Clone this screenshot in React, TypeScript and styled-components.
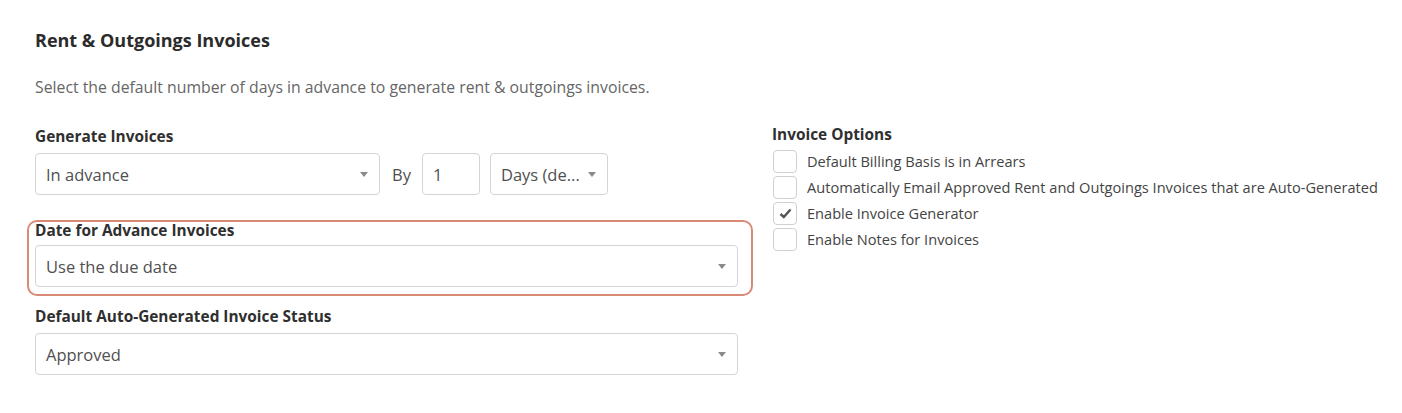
import styled, { createGlobalStyle } from "styled-components";

const GlobalStyle = createGlobalStyle`
    body {
        margin: 0;
        background: #ffffff;
        font-family: "Open Sans", "Noto Sans", sans-serif;
        color: #333333;
    }
`;

const Page = styled.div`
    padding: 28px 0 0 35px;
    height: 413px;
    box-sizing: border-box;
`;

const Title = styled.h3`
    margin: 0;
    font-size: 18px;
    font-weight: 700;
    line-height: 24px;
    color: #2b2b2b;
`;

const Description = styled.p`
    margin: 25px 0 0;
    font-size: 15.8px;
    line-height: 20px;
    color: #666666;
`;

const Columns = styled.div`
    display: grid;
    grid-template-columns: 703px auto;
    column-gap: 34px;
    margin-top: 30px;
`;

const Column = styled.div`
    display: flex;
    flex-direction: column;
`;

const FieldLabel = styled.div<{ $tight?: boolean }>`
    font-size: 15.4px;
    font-weight: 700;
    line-height: ${(p) => (p.$tight ? "18px" : "20px")};
    color: #2f2f2f;
    margin-bottom: ${(p) => (p.$tight ? "5px" : "6px")};
    white-space: nowrap;
`;

const Field = styled.div<{ $top?: number }>`
    margin-top: ${(p) => p.$top ?? 0}px;
`;

const Highlight = styled.div`
    margin: 25px -15px 0 -8px;
    padding: 0 13px 7px 6px;
    border: 2px solid #d98a76;
    border-radius: 10px;
`;

const Row = styled.div`
    display: flex;
    align-items: center;
`;

const SelectBox = styled.div<{ $width?: number }>`
    display: flex;
    align-items: center;
    justify-content: space-between;
    box-sizing: border-box;
    width: ${(p) => (p.$width ? `${p.$width}px` : "100%")};
    height: 42px;
    padding: 0 11px 0 10px;
    border: 1px solid #d4d4d4;
    border-radius: 4px;
    background: #ffffff;
    font-size: 16.5px;
    color: #505050;
    white-space: nowrap;
`;

const ByText = styled.span`
    margin: 0 11px 0 12px;
    font-size: 16.5px;
    color: #505050;
`;

const NumberBox = styled.div`
    box-sizing: border-box;
    width: 58px;
    height: 42px;
    padding: 0 10px;
    display: flex;
    align-items: center;
    border: 1px solid #d4d4d4;
    border-radius: 4px;
    font-size: 16.5px;
    color: #505050;
    margin-right: 10px;
`;

const OptionsTitle = styled.div`
    font-size: 15.4px;
    font-weight: 700;
    line-height: 20px;
    color: #2f2f2f;
    margin-top: -2px;
    margin-bottom: 3px;
`;

const OptionRow = styled.label`
    display: flex;
    align-items: center;
    height: 26px;
    font-size: 14.6px;
    color: #444444;
    white-space: nowrap;
`;

const Box = styled.span`
    box-sizing: border-box;
    flex: none;
    width: 24px;
    height: 23px;
    border: 1px solid #d0d0d0;
    border-radius: 4px;
    margin: 0 10px 0 1px;
    display: flex;
    align-items: center;
    justify-content: center;
    background: #ffffff;
`;

const Caret = () => (
    <svg width="8" height="5" viewBox="0 0 8 5">
        <path d="M0 0 L8 0 L4 5 Z" fill="#8a8a8a" />
    </svg>
);

const Tick = () => (
    <svg width="13" height="11" viewBox="0 0 13 11">
        <path
            d="M1.5 6 L4.8 9 L11.5 1.5"
            fill="none"
            stroke="#555555"
            strokeWidth="2.4"
        />
    </svg>
);

const Select = ({ value, width }: { value: string; width?: number }) => (
    <SelectBox $width={width}>
        <span>{value}</span>
        <Caret />
    </SelectBox>
);

const options = [
    { text: "Default Billing Basis is in Arrears", checked: false },
    {
        text: "Automatically Email Approved Rent and Outgoings Invoices that are Auto-Generated",
        checked: false,
    },
    { text: "Enable Invoice Generator", checked: true },
    { text: "Enable Notes for Invoices", checked: false },
];

export default function App() {
    return (
        <>
            <GlobalStyle />
            <Page>
                <Title>Rent &amp; Outgoings Invoices</Title>
                <Description>
                    Select the default number of days in advance to generate
                    rent &amp; outgoings invoices.
                </Description>

                <Columns>
                    <Column>
                        <Field>
                            <FieldLabel>Generate Invoices</FieldLabel>
                            <Row>
                                <Select value="In advance" width={345} />
                                <ByText>By</ByText>
                                <NumberBox>1</NumberBox>
                                <Select value="Days (de..." width={118} />
                            </Row>
                        </Field>

                        <Highlight>
                            <FieldLabel $tight>Date for Advance Invoices</FieldLabel>
                            <Select value="Use the due date" />
                        </Highlight>

                        <Field $top={11}>
                            <FieldLabel>Default Auto-Generated Invoice Status</FieldLabel>
                            <Select value="Approved" />
                        </Field>
                    </Column>

                    <Column>
                        <OptionsTitle>Invoice Options</OptionsTitle>
                        {options.map((o) => (
                            <OptionRow key={o.text}>
                                <Box>{o.checked && <Tick />}</Box>
                                {o.text}
                            </OptionRow>
                        ))}
                    </Column>
                </Columns>
            </Page>
        </>
    );
}
